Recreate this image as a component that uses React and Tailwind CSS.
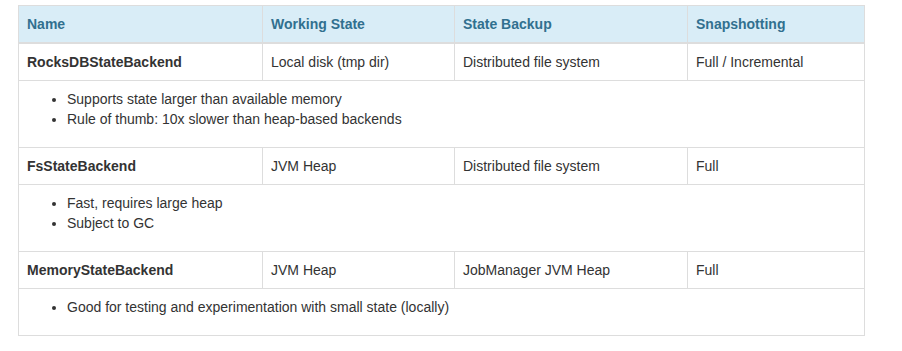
import React from "react";

const rows = [
  {
    name: "RocksDBStateBackend",
    working: "Local disk (tmp dir)",
    backup: "Distributed file system",
    snap: "Full / Incremental",
    notes: [
      "Supports state larger than available memory",
      "Rule of thumb: 10x slower than heap-based backends",
    ],
  },
  {
    name: "FsStateBackend",
    working: "JVM Heap",
    backup: "Distributed file system",
    snap: "Full",
    notes: ["Fast, requires large heap", "Subject to GC"],
  },
  {
    name: "MemoryStateBackend",
    working: "JVM Heap",
    backup: "JobManager JVM Heap",
    snap: "Full",
    notes: ["Good for testing and experimentation with small state (locally)"],
  },
];

export default function App() {
  return (
    <div
      className="w-[902px] h-[351px] bg-white pt-[5px] pl-[18px] text-[14px] leading-[20px] text-[#333]"
      style={{ fontFamily: '"Liberation Sans", Arial, sans-serif' }}
    >
      <table className="table-fixed border-collapse w-[846px]">
        <colgroup>
          <col className="w-[244px]" />
          <col className="w-[192px]" />
          <col className="w-[233px]" />
          <col className="w-[177px]" />
        </colgroup>
        <thead>
          <tr className="bg-[#d9edf7]">
            {["Name", "Working State", "State Backup", "Snapshotting"].map((h) => (
              <th
                key={h}
                className="border border-[#ddd] border-b-2 p-2 text-left font-bold text-[#31708f] align-bottom"
              >
                {h}
              </th>
            ))}
          </tr>
        </thead>
        <tbody>
          {rows.map((r) => (
            <React.Fragment key={r.name}>
              <tr>
                <td className="border border-[#ddd] p-2 font-bold">{r.name}</td>
                <td className="border border-[#ddd] p-2">{r.working}</td>
                <td className="border border-[#ddd] p-2">{r.backup}</td>
                <td className="border border-[#ddd] p-2">{r.snap}</td>
              </tr>
              <tr>
                <td colSpan={4} className="border border-[#ddd] p-2">
                  <ul className="list-disc pl-10 mb-[10px]">
                    {r.notes.map((n) => (
                      <li key={n}>{n}</li>
                    ))}
                  </ul>
                </td>
              </tr>
            </React.Fragment>
          ))}
        </tbody>
      </table>
    </div>
  );
}
